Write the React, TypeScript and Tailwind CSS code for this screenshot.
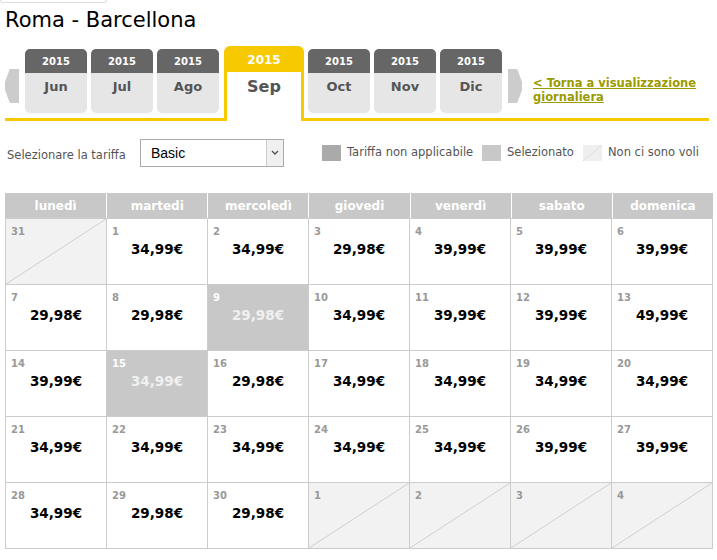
import React from "react";

const months = [
  { m: "Jun" },
  { m: "Jul" },
  { m: "Ago" },
  { m: "Sep", active: true },
  { m: "Oct" },
  { m: "Nov" },
  { m: "Dic" },
];

const days = ["lunedì", "martedi", "mercoledì", "giovedi", "venerdì", "sabato", "domenica"];

type Cell = { d: number; p?: string; sel?: boolean };

const weeks: Cell[][] = [
  [{ d: 31 }, { d: 1, p: "34,99" }, { d: 2, p: "34,99" }, { d: 3, p: "29,98" }, { d: 4, p: "39,99" }, { d: 5, p: "39,99" }, { d: 6, p: "39,99" }],
  [{ d: 7, p: "29,98" }, { d: 8, p: "29,98" }, { d: 9, p: "29,98", sel: true }, { d: 10, p: "34,99" }, { d: 11, p: "39,99" }, { d: 12, p: "39,99" }, { d: 13, p: "49,99" }],
  [{ d: 14, p: "39,99" }, { d: 15, p: "34,99", sel: true }, { d: 16, p: "29,98" }, { d: 17, p: "34,99" }, { d: 18, p: "34,99" }, { d: 19, p: "34,99" }, { d: 20, p: "34,99" }],
  [{ d: 21, p: "34,99" }, { d: 22, p: "34,99" }, { d: 23, p: "34,99" }, { d: 24, p: "34,99" }, { d: 25, p: "34,99" }, { d: 26, p: "39,99" }, { d: 27, p: "39,99" }],
  [{ d: 28, p: "34,99" }, { d: 29, p: "29,98" }, { d: 30, p: "29,98" }, { d: 1 }, { d: 2 }, { d: 3 }, { d: 4 }],
];

function Diagonal({ color = "#cfcfcf" }: { color?: string }) {
  return (
    <svg className="absolute inset-0 w-full h-full" viewBox="0 0 100 100" preserveAspectRatio="none">
      <line x1="0" y1="100" x2="100" y2="0" stroke={color} strokeWidth="1" vectorEffect="non-scaling-stroke" />
    </svg>
  );
}

function Arrow({ dir }: { dir: "left" | "right" }) {
  return (
    <svg width="14" height="34" viewBox="0 0 14 34" className="mb-[15px] shrink-0">
      {dir === "left" ? (
        <path d="M14 0 H5 Q4 0 4 2 L0 13 V21 L4 32 Q4 34 6 34 H14 Z" fill="#cccccc" />
      ) : (
        <path d="M0 0 H8 Q10 0 10 2 L14 13 V21 L10 32 Q10 34 8 34 H0 Z" fill="#cccccc" />
      )}
    </svg>
  );
}

export default function App() {
  return (
    <div className="w-[717px] h-[560px] bg-white overflow-hidden font-['DejaVu_Sans',Verdana,sans-serif] text-[#333]">
      <div className="w-[107px] h-[3px] border border-t-0 border-[#ddd] rounded-b-[4px]" />

      <h1 className="ml-[5px] mt-[3px] text-[21px] leading-[28px] text-black whitespace-nowrap">Roma - Barcellona</h1>

      {/* month strip */}
      <div className="mt-[12px] mx-[5px] w-[704px] flex items-end border-b-[3px] border-[#f7c900] h-[75px]">
        <Arrow dir="left" />
        <div className="flex items-end ml-[6px] gap-[4px]">
          {months.map((t) =>
            t.active ? (
              <div key={t.m} className="w-[80px] h-[75px] -mb-[3px] ml-[1px] rounded-t-[6px] bg-[#f7c900] px-[3px] flex flex-col">
                <div className="h-[26px] pt-[2px] flex items-center justify-center text-white font-bold text-[12px]">2015</div>
                <div className="flex-1 bg-white text-center text-[#555] font-bold text-[16px] pt-[3px]">Sep</div>
              </div>
            ) : (
              <div key={t.m} className="w-[62px] h-[64px] mb-[5px] rounded-[5px] overflow-hidden flex flex-col bg-[#e6e6e6]">
                <div className="h-[24px] bg-[#666] flex items-center justify-center text-white font-bold text-[10px]">2015</div>
                <div className="text-center text-[#555] font-bold text-[13px] pt-[4px]">{t.m}</div>
              </div>
            )
          )}
        </div>
        <div className="ml-[6px]">
          <Arrow dir="right" />
        </div>
        <a className="ml-[11px] mb-[14px] text-[11.5px] leading-[14px] font-bold text-[#9b9a00] underline whitespace-nowrap">
          &lt; Torna a visualizzazione
          <br />
          giornaliera
        </a>
      </div>

      {/* fare selector + legend */}
      <div className="flex items-center mt-[18px] h-[28px] text-[11.5px] text-[#555] whitespace-nowrap">
        <span className="ml-[7px] w-[133px] mt-[6px]">Selezionare la tariffa</span>
        <div className="w-[144px] h-[28px] border border-[#aaa] flex items-stretch bg-white">
          <span className="flex-1 pl-[10px] flex items-center text-[14px] text-black font-['Liberation_Sans',Arial,sans-serif]">Basic</span>
          <span className="w-[17px] border-l border-[#ccc] bg-[#f0f0f0] flex items-center justify-center">
            <svg width="8" height="6" viewBox="0 0 8 6">
              <path d="M1 1 L4 4 L7 1" fill="none" stroke="#555" strokeWidth="1.4" />
            </svg>
          </span>
        </div>
        <div className="ml-[38px] w-[160px] flex items-center">
          <span className="w-[19px] h-[16px] bg-[#aaa]" />
          <span className="ml-[6px]">Tariffa non applicabile</span>
        </div>
        <div className="w-[101px] flex items-center">
          <span className="w-[19px] h-[16px] bg-[#c8c8c8]" />
          <span className="ml-[6px]">Selezionato</span>
        </div>
        <div className="flex items-center">
          <span className="relative w-[19px] h-[16px] bg-[#efefef]">
            <Diagonal color="#dddddd" />
          </span>
          <span className="ml-[6px]">Non ci sono voli</span>
        </div>
      </div>

      {/* calendar */}
      <div className="mt-[26px] ml-[5px] w-[708px]">
        <div className="grid grid-cols-7 h-[25px] bg-[#c8c8c8]">
          {days.map((d, i) => (
            <div key={d} className={`flex items-center justify-center text-white font-bold text-[12px] ${i > 0 ? "border-l border-white" : ""}`}>
              {d}
            </div>
          ))}
        </div>
        <div className="border-l border-t border-[#cccccc]">
          {weeks.map((w, wi) => (
            <div key={wi} className="grid grid-cols-7">
              {w.map((c, ci) => {
                const nf = !c.p;
                return (
                  <div
                    key={ci}
                    className={`relative h-[66px] border-r border-b border-[#cccccc] ${nf ? "bg-[#f2f2f2]" : c.sel ? "bg-[#c8c8c8]" : "bg-white"}`}
                  >
                    {nf && <Diagonal />}
                    <div className={`relative pl-[5px] pt-[5px] text-[10px] font-bold ${c.sel ? "text-white" : "text-[#999]"}`}>{c.d}</div>
                    {c.p && (
                      <div className={`relative text-center font-bold text-[13.5px] ${c.sel ? "text-[#f0f0f0]" : "text-black"}`}>
                        {c.p}€
                      </div>
                    )}
                  </div>
                );
              })}
            </div>
          ))}
        </div>
      </div>
    </div>
  );
}
